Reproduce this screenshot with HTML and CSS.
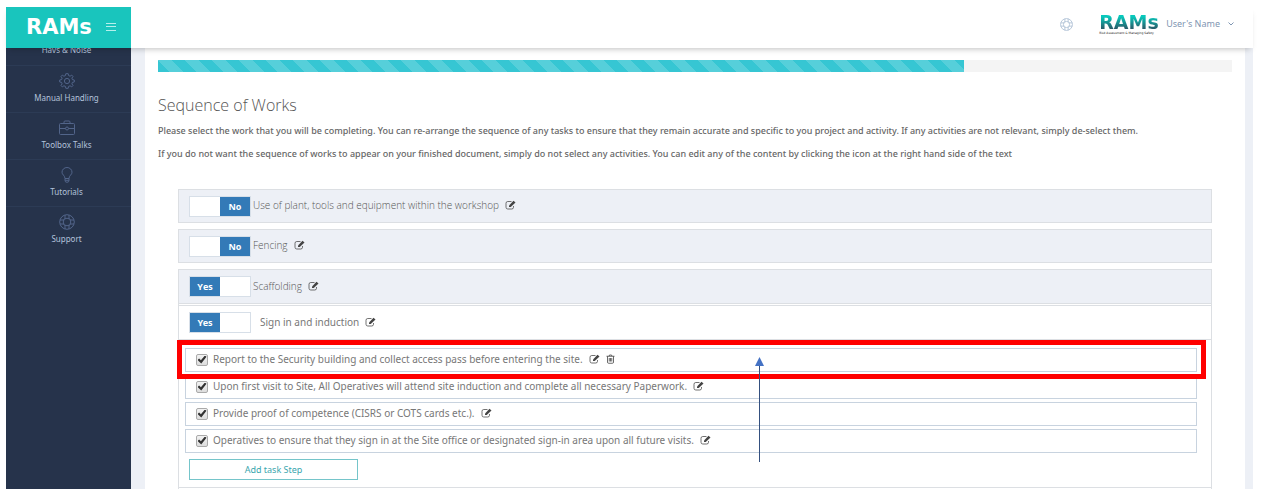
FILE: index.html
```html
<!DOCTYPE html>
<html lang="en">
<head>
<meta charset="utf-8">
<title>RAMs - Sequence of Works</title>
<link rel="stylesheet" href="styles.css">
</head>
<body>
<svg class="defs" width="0" height="0" aria-hidden="true">
  <symbol id="edit" viewBox="0 0 22 20">
    <path d="M13 3H5.500Q2 3 2 6.500V14.500Q2 18 5.500 18H13.500Q17 18 17 14.500V12" fill="none" stroke="currentColor" stroke-width="1.500"/>
    <path d="M8 14V11L17 1.500L21 5L11.500 14Z" fill="currentColor"/>
  </symbol>
  <symbol id="trash" viewBox="0 0 18 20">
    <path d="M1 4.500H17M6 4.500L7 2H11L12 4.500M3 4.500V16Q3 18.500 5 18.500H13Q15 18.500 15 16V4.500M6.500 8V15M9 8V15M11.500 8V15" fill="none" stroke="currentColor" stroke-width="1.600"/>
  </symbol>
  <symbol id="ring" viewBox="0 0 16 16">
    <g fill="none" stroke="currentColor"><circle cx="8" cy="8" r="7.300"/><circle cx="8" cy="8" r="3.800"/>
    <path d="M6 1V5M10 1V5M6 11V15M10 11V15M1 6H5M1 10H5M11 6H15M11 10H15"/></g>
  </symbol>
  <symbol id="gear" viewBox="0 0 16 16">
    <g fill="none" stroke="currentColor" stroke-linejoin="round"><circle cx="8" cy="8" r="2.600"/>
    <path d="M6.800 .7H9.200L9.600 2.600L11.100 3.200L12.700 2.100L14 3.500L12.900 5.100L13.400 6.600L15.300 7V9L13.400 9.400L12.900 10.900L14 12.500L12.700 13.900L11.100 12.800L9.600 13.400L9.200 15.300H6.800L6.400 13.400L4.900 12.800L3.300 13.900L2 12.500L3.100 10.900L2.600 9.400L.7 9V7L2.600 6.600L3.100 5.100L2 3.500L3.300 2.100L4.900 3.200L6.400 2.600Z"/></g>
  </symbol>
  <symbol id="case" viewBox="0 0 16 16">
    <g fill="none" stroke="currentColor"><rect x=".5" y="3.500" width="15" height="11" rx="1"/><path d="M5 3.500V2Q5 1 6 1H10Q11 1 11 2V3.500M.5 8.500H6.500M9.500 8.500H15.500"/><circle cx="8" cy="8.500" r="1.500"/></g>
  </symbol>
  <symbol id="bulb" viewBox="0 0 16 16">
    <path d="M6 11.500Q5.800 9.500 4.500 8.200Q3 6.800 3 5.200A5 4.700 0 0 1 13 5.200Q13 6.800 11.500 8.200Q10.200 9.500 10 11.500ZM6 11.500V13.500Q6 15.300 8 15.300Q10 15.300 10 13.500V11.500M6 13.300H10" fill="none" stroke="currentColor"/>
  </symbol>
</svg>
<div class="app">
  <header class="topbar">
    <div class="brand">
      <span class="brand-name">RAMs</span>
      <button class="menu-btn" aria-label="Toggle menu"><svg width="10" height="10" viewBox="0 0 10 10"><path d="M0 1.500H10M0 4.500H10M0 8.500H10" stroke="currentColor"/></svg></button>
    </div>
    <div class="account">
      <a class="help" href="#" aria-label="Help"><svg width="13" height="13"><use href="#ring"/></svg></a>
      <div class="company"><span class="company-name">RAMs</span><span class="tagline">Risk Assessment &amp; Managing Safety</span></div>
      <button class="user-btn">User's Name <svg width="6" height="4" viewBox="0 0 6 4"><path d="M.5 .5L3 3L5.500 .5" fill="none" stroke="currentColor"/></svg></button>
    </div>
  </header>
  <div class="body">
    <nav class="sidebar">
      <a class="nav-item cut" href="#">Havs &amp; Noise</a>
      <a class="nav-item" href="#"><svg width="16" height="16"><use href="#gear"/></svg>Manual Handling</a>
      <a class="nav-item" href="#"><svg width="16" height="16"><use href="#case"/></svg>Toolbox Talks</a>
      <a class="nav-item" href="#"><svg width="16" height="16"><use href="#bulb"/></svg>Tutorials</a>
      <a class="nav-item" href="#"><svg width="16" height="16"><use href="#ring"/></svg>Support</a>
    </nav>
    <main class="content">
      <div class="progress" role="progressbar" aria-valuenow="75" aria-valuemin="0" aria-valuemax="100" aria-label="Progress"><div class="bar" style="width:75%"></div></div>
      <h1>Sequence of Works</h1>
      <p>Please select the work that you will be completing. You can re-arrange the sequence of any tasks to ensure that they remain accurate and specific to you project and activity. If any activities are not relevant, simply de-select them.</p>
      <p>If you do not want the sequence of works to appear on your finished document, simply do not select any activities. You can edit any of the content by clicking the icon at the right hand side of the text</p>
      <div class="tasks">
        <section class="task"><div class="task-head">
          <button class="switch off" role="switch" aria-checked="false" aria-labelledby="t1"><span>No</span></button>
          <span id="t1">Use of plant, tools and equipment within the workshop</span>
          <button class="icon-btn" aria-label="Edit"><svg width="11" height="10"><use href="#edit"/></svg></button>
        </div></section>
        <section class="task"><div class="task-head">
          <button class="switch off" role="switch" aria-checked="false" aria-labelledby="t2"><span>No</span></button>
          <span id="t2">Fencing</span>
          <button class="icon-btn" aria-label="Edit"><svg width="11" height="10"><use href="#edit"/></svg></button>
        </div></section>
        <section class="task open"><div class="task-head">
          <button class="switch" role="switch" aria-checked="true" aria-labelledby="t3"><span>Yes</span></button>
          <span id="t3">Scaffolding</span>
          <button class="icon-btn" aria-label="Edit"><svg width="11" height="10"><use href="#edit"/></svg></button>
        </div>
        <div class="task-head sub">
          <button class="switch" role="switch" aria-checked="true" aria-labelledby="t4"><span>Yes</span></button>
          <span id="t4">Sign in and induction</span>
          <button class="icon-btn" aria-label="Edit"><svg width="11" height="10"><use href="#edit"/></svg></button>
        </div>
        <div class="steps">
          <div class="step marked"><label><input type="checkbox" checked>Report to the Security building and collect access pass before entering the site.</label>
            <button class="icon-btn" aria-label="Edit"><svg width="11" height="10"><use href="#edit"/></svg></button>
            <button class="icon-btn" aria-label="Delete"><svg width="9" height="10"><use href="#trash"/></svg></button></div>
          <div class="step"><label><input type="checkbox" checked>Upon first visit to Site, All Operatives will attend site induction and complete all necessary Paperwork.</label>
            <button class="icon-btn" aria-label="Edit"><svg width="11" height="10"><use href="#edit"/></svg></button></div>
          <div class="step"><label><input type="checkbox" checked>Provide proof of competence (CISRS or COTS cards etc.).</label>
            <button class="icon-btn" aria-label="Edit"><svg width="11" height="10"><use href="#edit"/></svg></button></div>
          <div class="step"><label><input type="checkbox" checked>Operatives to ensure that they sign in at the Site office or designated sign-in area upon all future visits.</label>
            <button class="icon-btn" aria-label="Edit"><svg width="11" height="10"><use href="#edit"/></svg></button></div>
          <svg class="arrow" width="10" height="106" viewBox="0 0 10 106" aria-hidden="true"><path d="M4.500 8V105" stroke="#34507f"/><path d="M4.500 0L9 9H0Z" fill="#4472c4"/></svg>
        </div>
        <button class="add">Add task Step</button>
        </section>
        <section class="task next"></section>
      </div>
    </main>
  </div>
</div>
</body>
</html>
```
FILE: styles.css
```css
* { box-sizing: border-box; }
body {
  margin: 0;
  height: 100vh;
  padding: 7px 14px 6px 6px;
  background: #fff;
  color: #555;
  font: 10px/14px "Open Sans", sans-serif;
  overflow: hidden;
}
button { font: inherit; color: inherit; background: none; border: 0; padding: 0; }
a { color: inherit; text-decoration: none; }
svg { display: block; flex: none; }
.defs { position: absolute; }
.app { height: 100%; display: flex; flex-direction: column; }

.topbar {
  flex: none;
  display: flex;
  justify-content: space-between;
  height: 41px;
  background: #fff;
  box-shadow: 0 4px 6px -3px rgba(0, 0, 0, .25);
  z-index: 1;
}
.brand {
  width: 125px;
  padding: 0 15px 2px 20px;
  display: flex;
  align-items: center;
  justify-content: space-between;
  background: #19c5bd;
  color: #fff;
}
.brand-name { font: bold 21px/24px "DejaVu Sans", sans-serif; }
.menu-btn { color: #b5f0ec; }
.account { display: flex; align-items: center; padding: 0 19px 8px 0; color: #7f96b2; }
.help { color: #a9bdd3; margin: 2px 26px 0 0; }
.company { display: flex; flex-direction: column; width: 60px; margin-right: 7px; }
.company-name {
  font: bold 19px/18px "DejaVu Sans", sans-serif;
  background: linear-gradient(#08c9bc 20%, #285f6c 85%);
  background-clip: text;
  color: transparent;
}
.tagline { font: 3px/4px "DejaVu Sans", sans-serif; color: #222; white-space: nowrap; }
.user-btn { display: flex; align-items: center; gap: 8px; font: 9px/14px "Noto Sans", sans-serif; }

.body { flex: 1; min-height: 0; display: flex; background: #edf0f6; overflow: hidden; }
.sidebar { flex: none; width: 125px; background: #26334b; color: #b4c3db; overflow: hidden; }
.nav-item {
  height: 47px;
  padding: 7px 4px 0 0;
  display: flex;
  flex-direction: column;
  align-items: center;
  gap: 2px;
  font: 8px/14px "Noto Sans", sans-serif;
  border-top: 1px solid #2c3b55;
}
.nav-item svg { color: #52658a; }
.nav-item.cut { height: 17px; padding-top: 0; border: 0; line-height: 4px; }
.content {
  flex: 1;
  min-width: 0;
  margin: 0 8px 0 14px;
  padding: 12px 13px 0;
  background: #fff;
}
.progress { height: 12px; background: #f4f4f4; }
.bar {
  height: 100%;
  background: #36c6d3 linear-gradient(45deg, rgba(255,255,255,.16) 25%, transparent 25%, transparent 50%, rgba(255,255,255,.16) 50%, rgba(255,255,255,.16) 75%, transparent 75%) 0 0 / 27px 27px;
}
h1 { margin: 22px 0 8px; font-size: 16px; line-height: 22px; font-weight: 300; color: #555; }
p { margin: 0 0 9px; font: 500 9px/14px "Noto Sans", sans-serif; color: #666; }

.tasks { margin: 28px 20px 0; }
.task { margin-bottom: 6px; border: 1px solid #dcdfe3; background: #edf0f6; }
.task-head { display: flex; align-items: center; height: 32px; padding-left: 10px; font-weight: 300; }
.task-head > span { margin: 0 6px 2px 2px; }
.icon-btn { color: #444; }
.task-head .icon-btn { margin-bottom: 2px; }
.switch {
  width: 62px;
  height: 21px;
  display: flex;
  border: 1px solid #d7dfe8;
  background: #fff;
}
.switch span { width: 30px; line-height: 19px; background: #337ab7; color: #fff; font-size: 9px; font-weight: 700; }
.switch.off { justify-content: flex-end; }
.task.open { margin: 0; background: #fff; }
.open .task-head { background: #edf0f6; border-bottom: 1px solid #dcdfe3; height: 34px; }
.open .task-head.sub { margin-top: 1px; background: #fff; border-top: 1px solid #dcdfe3; height: 35px; }
.task-head.sub, .step { font-family: "Noto Sans", sans-serif; font-weight: 400; color: #777; }
.task-head.sub > span { margin-left: 9px; }
.steps { position: relative; display: flex; flex-direction: column; gap: 3px; padding: 8px 14px 0 6px; }
.step {
  position: relative;
  display: flex;
  align-items: center;
  gap: 6px;
  height: 24px;
  padding: 0 0 3px 10px;
  border: 1px solid #c8d3df;
}
.step label { display: flex; align-items: center; }
.step input {
  appearance: none;
  width: 12px;
  height: 12px;
  margin: 2px 5px 0 0;
  border: 1px solid #aaa;
  border-radius: 2px;
  background: linear-gradient(#f2f2f2, #ddd);
  display: grid;
  place-items: center;
}
.step input::before {
  content: "";
  width: 9px;
  height: 8px;
  background: #333;
  clip-path: polygon(0 55%, 18% 38%, 38% 58%, 82% 0, 100% 15%, 42% 100%);
}
.marked::after {
  content: "";
  position: absolute;
  inset: -9px -10px -8px -9px;
  border: 5px solid #f00;
  pointer-events: none;
}
.marked { z-index: 1; }
.arrow { position: absolute; left: 56%; margin-left: -2px; top: 17px; z-index: 2; }
.add {
  display: block;
  width: 169px;
  height: 21px;
  margin: 6px 10px 7px;
  border: 1px solid #75c5ca;
  color: #3aa6ae;
  font: 9px/14px "Noto Sans", sans-serif;
}
.next { margin: 0; height: 20px; border-top: 0; background: #fff; }
```
